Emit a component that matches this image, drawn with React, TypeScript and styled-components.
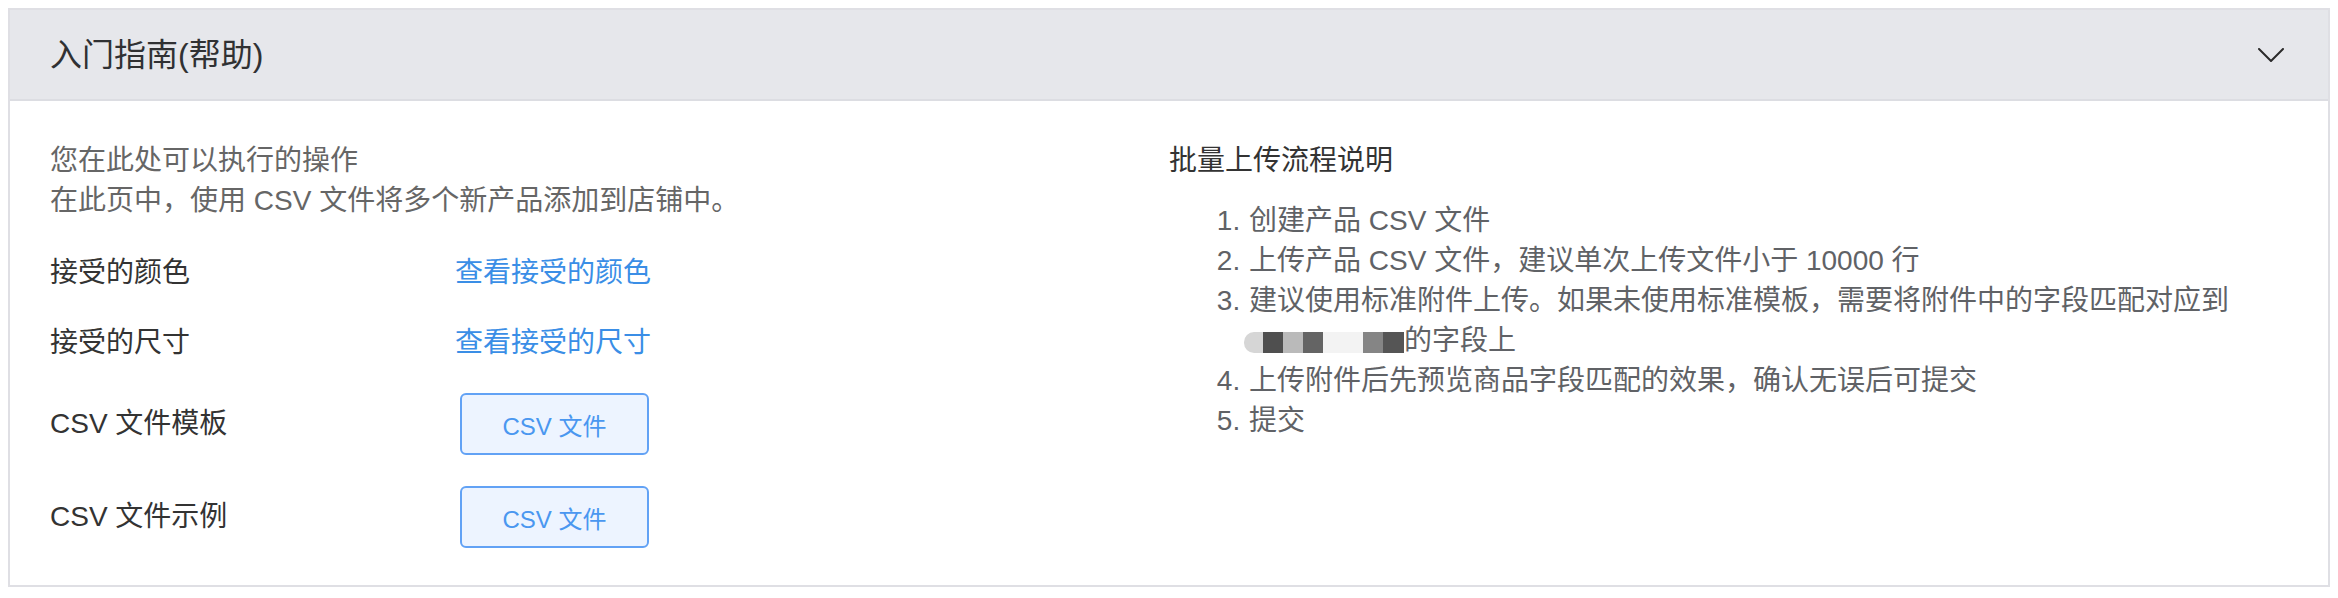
import React from "react";
import styled, { createGlobalStyle } from "styled-components";

const Global = createGlobalStyle`
  html, body { margin: 0; padding: 0; background: #ffffff; }
  body {
    margin: 8px;
    font-family: "Liberation Sans", "Noto Sans CJK SC", sans-serif;
  }
  * { box-sizing: border-box; }
`;

const Panel = styled.section`
  border: 2px solid #dfdfe4;
  background: #ffffff;
`;

const Header = styled.header`
  display: flex;
  align-items: center;
  justify-content: space-between;
  height: 91px;
  padding: 0 44px 0 40px;
  background: #e6e7eb;
  border-bottom: 2px solid #dcdde2;
`;

const Title = styled.h2`
  margin: 0;
  font-size: 32px;
  font-weight: 400;
  color: #303133;
  line-height: 40px;
`;

const Chevron = styled.svg`
  display: block;
  width: 26px;
  height: 14px;
`;

const Body = styled.div`
  display: grid;
  grid-template-columns: 1fr 1fr;
  padding: 40px 40px 37px 40px;
  font-size: 28px;
  line-height: 40px;
`;

const Column = styled.div`
  display: flex;
  flex-direction: column;
`;

const Intro = styled.p`
  margin: 0;
  color: #666666;
`;

const Rows = styled.div`
  display: flex;
  flex-direction: column;
  gap: 30px;
  margin-top: 32px;
`;

const Row = styled.div<{ $tall?: boolean }>`
  display: grid;
  grid-template-columns: 405px auto;
  align-items: center;
  margin-top: ${(p) => (p.$tall ? "1px" : "0")};
`;

const Label = styled.span`
  color: #333333;
`;

const Link = styled.a`
  color: #3a8ee6;
  text-decoration: none;
  cursor: pointer;
  justify-self: start;
`;

const FileButton = styled.button`
  justify-self: start;
  margin-left: 5px;
  width: 189px;
  height: 62px;
  border: 2px solid #62a2f5;
  border-radius: 6px;
  background: #edf4ff;
  color: #4a97f0;
  font-family: "Liberation Sans", "Noto Sans CJK SC", sans-serif;
  font-size: 24px;
  cursor: pointer;
`;

const Heading = styled.h3`
  margin: 0;
  font-size: 28px;
  font-weight: 400;
  color: #333333;
`;

const Steps = styled.ol`
  margin: 20px 0 0 0;
  padding-left: 79px;
  color: #606266;
`;

const Step = styled.li`
  padding-left: 1px;
`;

const Redacted = styled.span`
  display: inline-flex;
  align-items: center;
  vertical-align: top;
  height: 40px;
  margin-left: -5px;
  filter: blur(0.7px);
`;

const Block = styled.span<{ $w: number; $c: string; $round?: boolean }>`
  display: inline-block;
  width: ${(p) => p.$w}px;
  height: 21px;
  margin-top: 2px;
  background: ${(p) => p.$c};
  border-radius: ${(p) => (p.$round ? "10px 0 0 10px" : "0")};
`;

const rows: { label: string; kind: "link" | "button"; value: string }[] = [
  { label: "接受的颜色", kind: "link", value: "查看接受的颜色" },
  { label: "接受的尺寸", kind: "link", value: "查看接受的尺寸" },
  { label: "CSV 文件模板", kind: "button", value: "CSV 文件" },
  { label: "CSV 文件示例", kind: "button", value: "CSV 文件" },
];

const blocks = [
  { w: 19, c: "#d6d6d6", round: true },
  { w: 20, c: "#4f4f4f" },
  { w: 20, c: "#bababa" },
  { w: 20, c: "#646464" },
  { w: 40, c: "#f3f3f3" },
  { w: 20, c: "#858585" },
  { w: 21, c: "#555555" },
];

export default function App() {
  return (
    <>
      <Global />
      <Panel>
        <Header>
          <Title>入门指南(帮助)</Title>
          <Chevron viewBox="0 0 26 14" fill="none">
            <polyline
              points="1,1 13,13 25,1"
              stroke="#2b2b2b"
              strokeWidth="2"
              strokeLinecap="round"
              strokeLinejoin="round"
            />
          </Chevron>
        </Header>
        <Body>
          <Column>
            <Intro>您在此处可以执行的操作</Intro>
            <Intro>在此页中，使用 CSV 文件将多个新产品添加到店铺中。</Intro>
            <Rows>
              {rows.map((r, i) => (
                <Row key={r.label} $tall={i === 3}>
                  <Label>{r.label}</Label>
                  {r.kind === "link" ? (
                    <Link>{r.value}</Link>
                  ) : (
                    <FileButton>{r.value}</FileButton>
                  )}
                </Row>
              ))}
            </Rows>
          </Column>
          <Column>
            <Heading>批量上传流程说明</Heading>
            <Steps>
              <Step>创建产品 CSV 文件</Step>
              <Step>上传产品 CSV 文件，建议单次上传文件小于 10000 行</Step>
              <Step>
                建议使用标准附件上传。如果未使用标准模板，需要将附件中的字段匹配对应到
                <Redacted>
                  {blocks.map((b, i) => (
                    <Block key={i} $w={b.w} $c={b.c} $round={b.round} />
                  ))}
                </Redacted>
                的字段上
              </Step>
              <Step>上传附件后先预览商品字段匹配的效果，确认无误后可提交</Step>
              <Step>提交</Step>
            </Steps>
          </Column>
        </Body>
      </Panel>
    </>
  );
}
